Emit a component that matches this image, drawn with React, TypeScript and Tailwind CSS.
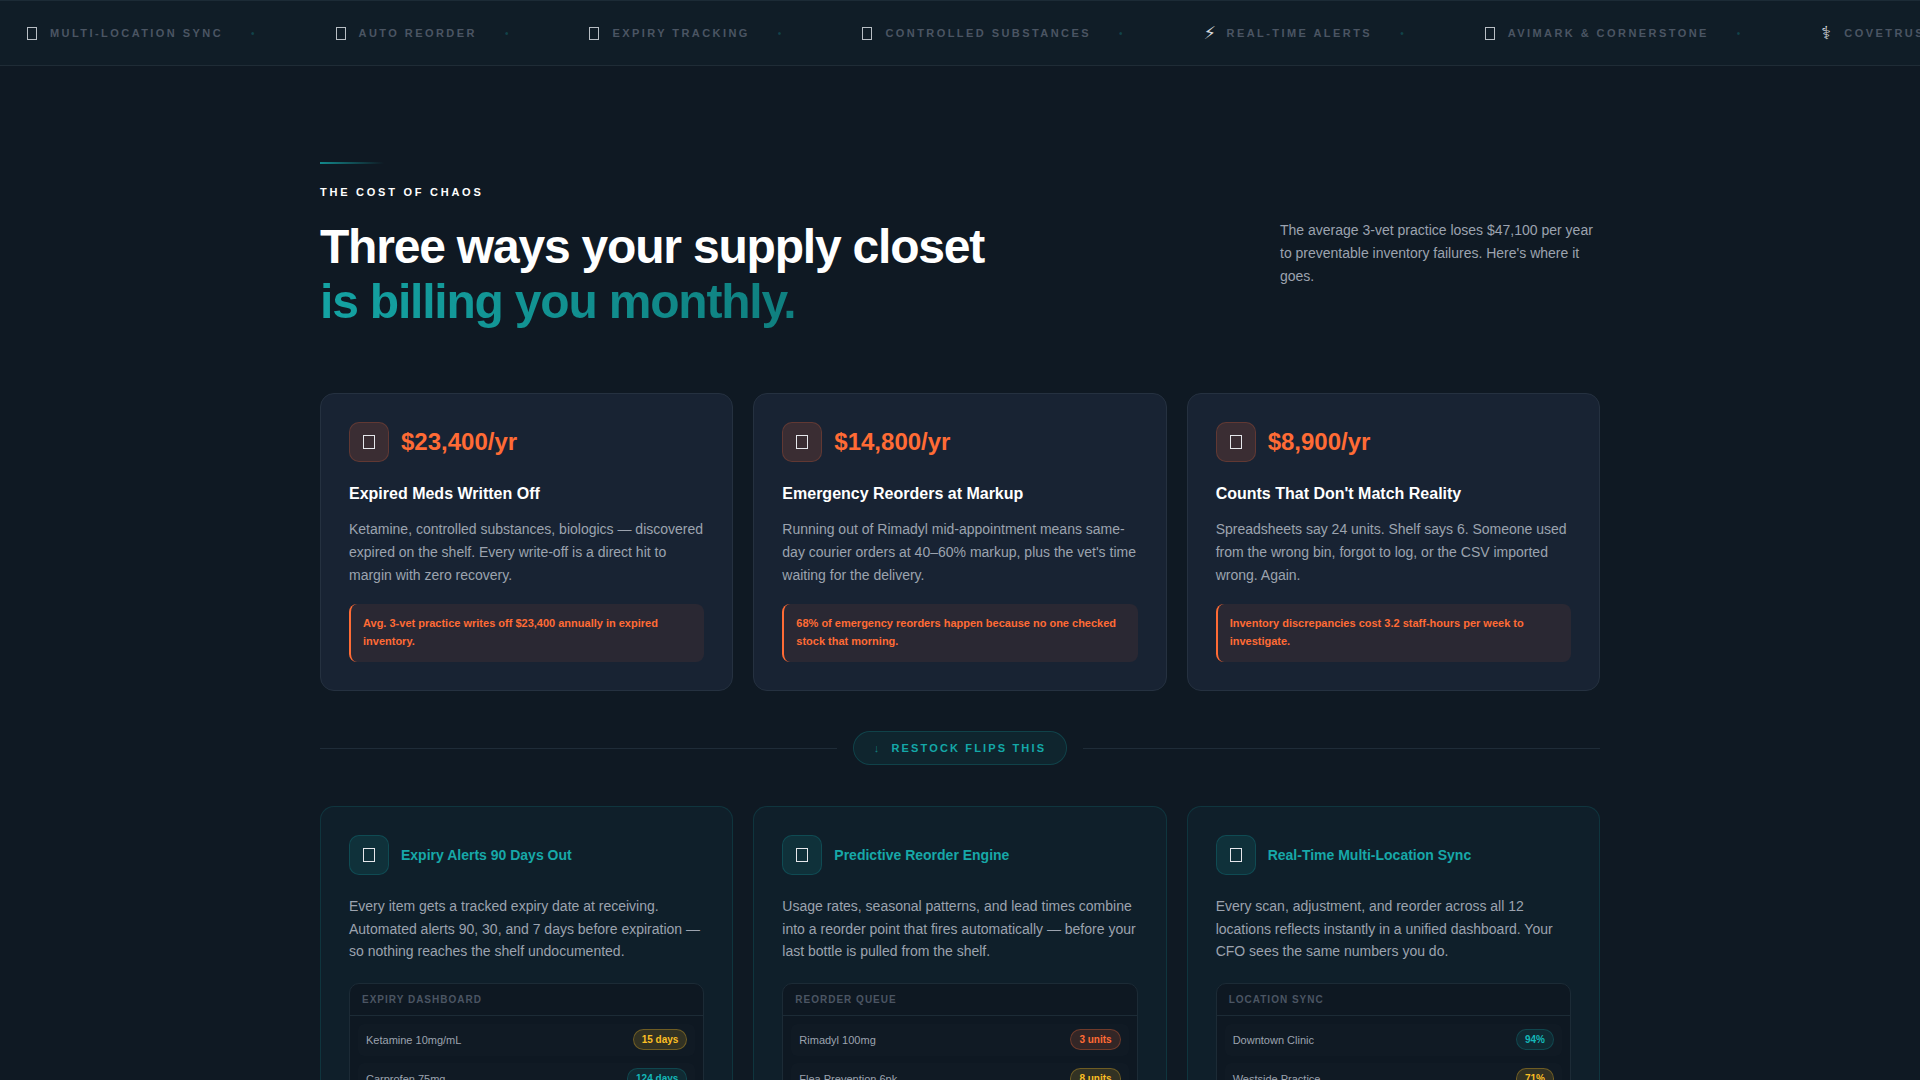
import React from 'react'

const ticker = [
  { icon: '', label: 'MULTI-LOCATION SYNC' },
  { icon: '', label: 'AUTO REORDER' },
  { icon: '', label: 'EXPIRY TRACKING' },
  { icon: '', label: 'CONTROLLED SUBSTANCES' },
  { icon: '⚡\uFE0E', label: 'REAL-TIME ALERTS' },
  { icon: '', label: 'AVIMARK & CORNERSTONE' },
  { icon: '⚕\uFE0E', label: 'COVETRUS' },
]

const problems = [
  {
    cost: '$23,400/yr',
    title: 'Expired Meds Written Off',
    body: 'Ketamine, controlled substances, biologics — discovered expired on the shelf. Every write-off is a direct hit to margin with zero recovery.',
    note: 'Avg. 3-vet practice writes off $23,400 annually in expired inventory.',
  },
  {
    cost: '$14,800/yr',
    title: 'Emergency Reorders at Markup',
    body: "Running out of Rimadyl mid-appointment means same-day courier orders at 40–60% markup, plus the vet's time waiting for the delivery.",
    note: '68% of emergency reorders happen because no one checked stock that morning.',
  },
  {
    cost: '$8,900/yr',
    title: "Counts That Don't Match Reality",
    body: 'Spreadsheets say 24 units. Shelf says 6. Someone used from the wrong bin, forgot to log, or the CSV imported wrong. Again.',
    note: 'Inventory discrepancies cost 3.2 staff-hours per week to investigate.',
  },
]

const badgeStyles = {
  amber: 'text-[#fbbf24] bg-[#fbbf24]/15 border-[#fbbf24]/30',
  red: 'text-[#ff6b35] bg-[#ff6b35]/15 border-[#ff6b35]/30',
  teal: 'text-[#14b8b8] bg-[#14b8b8]/10 border-[#14b8b8]/20',
}

const fixes = [
  {
    title: 'Expiry Alerts 90 Days Out',
    body: 'Every item gets a tracked expiry date at receiving. Automated alerts 90, 30, and 7 days before expiration — so nothing reaches the shelf undocumented.',
    panel: 'EXPIRY DASHBOARD',
    rows: [
      { name: 'Ketamine 10mg/mL', value: '15 days', tone: 'amber' as const },
      { name: 'Carprofen 75mg', value: '124 days', tone: 'teal' as const },
    ],
  },
  {
    title: 'Predictive Reorder Engine',
    body: 'Usage rates, seasonal patterns, and lead times combine into a reorder point that fires automatically — before your last bottle is pulled from the shelf.',
    panel: 'REORDER QUEUE',
    rows: [
      { name: 'Rimadyl 100mg', value: '3 units', tone: 'red' as const },
      { name: 'Flea Prevention 6pk', value: '8 units', tone: 'amber' as const },
    ],
  },
  {
    title: 'Real-Time Multi-Location Sync',
    body: 'Every scan, adjustment, and reorder across all 12 locations reflects instantly in a unified dashboard. Your CFO sees the same numbers you do.',
    panel: 'LOCATION SYNC',
    rows: [
      { name: 'Downtown Clinic', value: '94%', tone: 'teal' as const },
      { name: 'Westside Practice', value: '71%', tone: 'amber' as const },
    ],
  },
]

// the reference shows a missing-glyph box where its emoji could not be drawn
const Tofu = () => <span className="block w-[12px] h-[14px] border border-[#e5e7eb] -mt-[1px]" />

export default function App() {
  return (
    <div className="h-screen overflow-hidden bg-[#0f1923] font-['Liberation_Sans',Arial,sans-serif]">
      {/* Ticker */}
      <div className="h-[66px] flex items-center overflow-hidden bg-[#101d27] border-t border-b border-t-[#1c2b36] border-b-[#1f2c36] pl-[26px]">
        {ticker.map((item) => (
          <div key={item.label} className="flex items-center shrink-0 whitespace-nowrap mr-[80px]">
            <span className="w-[24px] flex items-center">
              {item.icon ? (
                <span className="font-['DejaVu_Sans',sans-serif] text-[18px] text-[#d4d8dc] leading-none ml-[1px]">{item.icon}</span>
              ) : (
                <span className="block w-[10px] h-[13px] ml-[1px] border border-[#b8bec4]" />
              )}
            </span>
            <span className="text-[11px] font-bold tracking-[2.44px] text-[#4b5563]">{item.label}</span>
            <span className="text-[10px] text-[#14b8b8]/25 ml-[28px]">•</span>
          </div>
        ))}
      </div>

      <div className="w-[1280px] mx-auto pt-[96px]">
        {/* Section header */}
        <div className="w-[64px] h-[2px] bg-gradient-to-r from-[#14b8b8]/70 to-transparent mb-[22px]" />
        <div className="text-[11px] font-bold tracking-[2.75px] text-white leading-[13px] mb-[20px]">THE COST OF CHAOS</div>
        <div className="flex justify-between items-start mb-[64px]">
          <h2 className="text-[48px] font-bold leading-[55px] tracking-[-1.2px] text-white">
            Three ways your supply closet
            <br />
            <span className="bg-gradient-to-r from-[#14a3a3] to-[#0f7f7f] bg-clip-text text-transparent">is billing you monthly.</span>
          </h2>
          <p className="w-[320px] text-[14px] leading-[23px] text-[#9ca3af]">
            The average 3-vet practice loses $47,100 per year to preventable inventory failures. Here's where it goes.
          </p>
        </div>

        {/* Problem cards */}
        <div className="grid grid-cols-3 gap-[20px]">
          {problems.map((p) => (
            <div key={p.title} className="bg-[#182333] border border-[#253140] rounded-[14px] p-[28px]">
              <div className="flex items-center gap-[12px] mb-[21px]">
                <div className="w-[40px] h-[40px] rounded-[10px] bg-[#ff6b35]/15 border border-[#ff6b35]/20 flex items-center justify-center">
                  <Tofu />
                </div>
                <div className="text-[24px] font-bold text-[#ff6b35]">{p.cost}</div>
              </div>
              <h3 className="text-[16px] font-bold text-white leading-[22px] mb-[13px]">{p.title}</h3>
              <p className="text-[14px] leading-[23px] text-[#9ca3af] mb-[17px]">{p.body}</p>
              <div className="bg-[#ff6b35]/8 border-l-2 border-[#ff6b35] rounded-[8px] pl-[12px] pr-[12px] pt-[10px] pb-[12px] text-[11px] font-bold leading-[18px] text-[#ff6b35]">
                {p.note}
              </div>
            </div>
          ))}
        </div>

        {/* Divider */}
        <div className="flex items-center gap-[16px] mt-[40px] mb-[41px]">
          <div className="flex-1 h-px bg-[#1f2c38]" />
          <div className="h-[34px] px-[20px] flex items-center gap-[10px] rounded-full bg-[#14b8b8]/8 border border-[#14b8b8]/20 text-[11px] font-bold tracking-[2.15px] text-[#14a8a8]">
            <span className="text-[#14a8a8]/70">↓</span>
            <span>RESTOCK FLIPS THIS</span>
          </div>
          <div className="flex-1 h-px bg-[#1f2c38]" />
        </div>

        {/* Fix cards */}
        <div className="grid grid-cols-3 gap-[20px]">
          {fixes.map((f) => (
            <div key={f.title} className="bg-[#0f1f2a] border border-[#14b8b8]/15 rounded-[14px] p-[28px]">
              <div className="flex items-center gap-[12px] mb-[20px]">
                <div className="w-[40px] h-[40px] rounded-[10px] bg-[#14b8b8]/12 border border-[#14b8b8]/20 flex items-center justify-center">
                  <Tofu />
                </div>
                <h3 className="text-[14px] font-bold text-[#17a8a8]">{f.title}</h3>
              </div>
              <p className="text-[14px] leading-[22.6px] text-[#9ca3af] mb-[20px]">{f.body}</p>
              <div className="bg-[#0e1822] border border-[#1c2b36] rounded-[10px]">
                <div className="h-[32px] flex items-center px-[12px] border-b border-[#1c2b36] text-[10px] font-bold tracking-[1px] text-[#4b5563]">
                  {f.panel}
                </div>
                <div className="p-[8px] flex flex-col gap-[7px]">
                  {f.rows.map((r) => (
                    <div key={r.name} className="h-[32px] px-[8px] flex items-center justify-between rounded-[6px] bg-[#101a24]">
                      <span className="text-[11px] text-[#9ca3af]">{r.name}</span>
                      <span className={`h-[21px] px-[8px] flex items-center rounded-full border text-[10px] font-bold ${badgeStyles[r.tone]}`}>
                        {r.value}
                      </span>
                    </div>
                  ))}
                </div>
              </div>
            </div>
          ))}
        </div>
      </div>
    </div>
  )
}
